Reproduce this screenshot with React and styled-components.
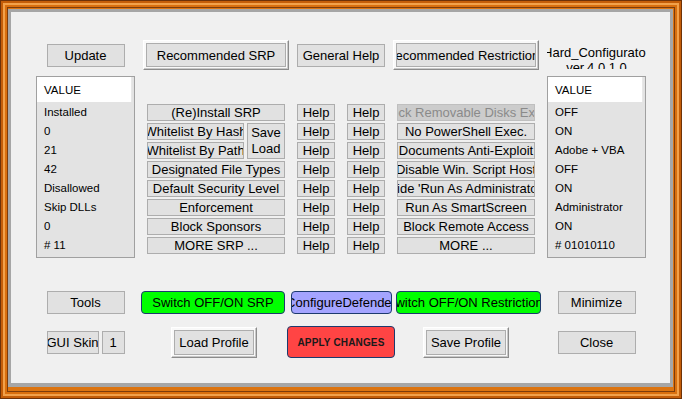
import React from "react";
import styled, { createGlobalStyle } from "styled-components";

const GlobalStyle = createGlobalStyle`
  html, body {
    margin: 0;
    padding: 0;
    background: #f0f0f0;
  }
  body {
    font-family: "Liberation Sans", Arial, sans-serif;
  }
`;

const srpButtons = [
  "(Re)Install SRP",
  "Whitelist By Hash",
  "Whitelist By Path",
  "Designated File Types",
  "Default Security Level",
  "Enforcement",
  "Block Sponsors",
  "MORE SRP ...",
];

const restrictionButtons = [
  { label: "Block Removable Disks Exec.", disabled: true },
  { label: "No PowerShell Exec." },
  { label: "Documents Anti-Exploit" },
  { label: "Disable Win. Script Host" },
  { label: "Hide  'Run As Administrator'" },
  { label: "Run As SmartScreen" },
  { label: "Block Remote Access" },
  { label: "MORE ..." },
];

const srpValues = ["Installed", "0", "21", "42", "Disallowed", "Skip DLLs", "0", "# 11"];
const restrictionValues = ["OFF", "ON", "Adobe + VBA", "OFF", "ON", "Administrator", "ON", "# 01010110"];

const App = () => {
  return (
    <>
      <GlobalStyle />
      <Frame>
        <Panel>
          <Row $h={30} $top={28}>
            <Slot $w={99}>
              <FlatButton $w={78}>
                <Caption>Update</Caption>
              </FlatButton>
            </Slot>
            <Slot $w={162}>
              <RaisedFrame $w={146} $h={30}>
                <FlatButton $fill>
                  <Caption>Recommended SRP</Caption>
                </FlatButton>
              </RaisedFrame>
            </Slot>
            <Slot $w={88}>
              <FlatButton $w={88}>
                <Caption>General Help</Caption>
              </FlatButton>
            </Slot>
            <Slot $w={162}>
              <RaisedFrame $w={146} $h={30}>
                <FlatButton $fill>
                  <Caption>Recommended Restrictions</Caption>
                </FlatButton>
              </RaisedFrame>
            </Slot>
            <Slot $w={99}>
              <TitleLabel>
                <Caption>Hard_Configurator</Caption>
                <Caption>ver.4.0.1.0</Caption>
              </TitleLabel>
            </Slot>
          </Row>

          <Middle>
            <ValueList>
              <ListHeader>VALUE</ListHeader>
              {srpValues.map((v, i) => (
                <ListRow key={i}>{v}</ListRow>
              ))}
            </ValueList>

            <ButtonArea>
              <Slot $w={162} $start>
                <SrpGrid>
                  <FlatButton $span>
                    <Caption>{srpButtons[0]}</Caption>
                  </FlatButton>
                  <FlatButton>
                    <Caption>{srpButtons[1]}</Caption>
                  </FlatButton>
                  <StackButton>
                    <Caption>Save</Caption>
                    <Caption>Load</Caption>
                  </StackButton>
                  <FlatButton>
                    <Caption>{srpButtons[2]}</Caption>
                  </FlatButton>
                  {srpButtons.slice(3).map((b) => (
                    <FlatButton key={b} $span>
                      <Caption>{b}</Caption>
                    </FlatButton>
                  ))}
                </SrpGrid>
              </Slot>
              <HelpSlot>
                <ButtonColumn>
                  {srpButtons.map((b) => (
                    <FlatButton key={b} $w={38} $h={17}>
                      <Caption>Help</Caption>
                    </FlatButton>
                  ))}
                </ButtonColumn>
                <ButtonColumn>
                  {restrictionButtons.map((b) => (
                    <FlatButton key={b.label} $w={38} $h={17}>
                      <Caption>Help</Caption>
                    </FlatButton>
                  ))}
                </ButtonColumn>
              </HelpSlot>
              <Slot $w={162} $start>
                <ButtonColumn>
                  {restrictionButtons.map((b) => (
                    <FlatButton key={b.label} $w={138} $h={17} disabled={b.disabled}>
                      <Caption>{b.label}</Caption>
                    </FlatButton>
                  ))}
                </ButtonColumn>
              </Slot>
            </ButtonArea>

            <ValueList>
              <ListHeader>VALUE</ListHeader>
              {restrictionValues.map((v, i) => (
                <ListRow key={i}>{v}</ListRow>
              ))}
            </ValueList>
          </Middle>

          <Row $h={23} $top={33}>
            <Slot $w={99}>
              <FlatButton $w={78}>
                <Caption>Tools</Caption>
              </FlatButton>
            </Slot>
            <Slot $w={162}>
              <ColorButton $w={144} $bg="#00ff00" $shift={-3}>
                <Caption>Switch OFF/ON SRP</Caption>
              </ColorButton>
            </Slot>
            <Slot $w={88}>
              <ColorButton $w={101} $bg="#a4a4ff">
                <Caption>ConfigureDefender</Caption>
              </ColorButton>
            </Slot>
            <Slot $w={162}>
              <ColorButton $w={145} $bg="#00ff00" $shift={2}>
                <Caption>Switch OFF/ON Restrictions</Caption>
              </ColorButton>
            </Slot>
            <Slot $w={99}>
              <FlatButton $w={78}>
                <Caption>Minimize</Caption>
              </FlatButton>
            </Slot>
          </Row>

          <Row $h={32} $top={12}>
            <Slot $w={99}>
              <SkinGroup>
                <FlatButton $w={52}>
                  <Caption>GUI Skin</Caption>
                </FlatButton>
                <FlatButton $w={23}>
                  <Caption>1</Caption>
                </FlatButton>
              </SkinGroup>
            </Slot>
            <Slot $w={162}>
              <RaisedFrame $w={86} $h={31} $shift={-2}>
                <FlatButton $fill>
                  <Caption>Load Profile</Caption>
                </FlatButton>
              </RaisedFrame>
            </Slot>
            <Slot $w={88}>
              <ApplyButton>
                <Caption>APPLY CHANGES</Caption>
              </ApplyButton>
            </Slot>
            <Slot $w={162}>
              <RaisedFrame $w={86} $h={31}>
                <FlatButton $fill>
                  <Caption>Save Profile</Caption>
                </FlatButton>
              </RaisedFrame>
            </Slot>
            <Slot $w={99}>
              <FlatButton $w={78}>
                <Caption>Close</Caption>
              </FlatButton>
            </Slot>
          </Row>
        </Panel>
      </Frame>
    </>
  );
};

const Frame = styled.div`
  box-sizing: border-box;
  width: 682px;
  height: 399px;
  padding: 9px 9px 12px 8px;
  display: flex;
  background: #dc7410;
  box-shadow: inset 0 0 0 1px #6e3208, inset 0 0 0 3px #c45d08,
    inset 0 0 0 5px #f2a14a, inset 0 0 0 7px #d96f0e,
    inset 0 0 0 8px #7c3c0c;
`;

const Panel = styled.div`
  flex: 1;
  box-sizing: border-box;
  background: #f0f0f0;
  border: 3px solid #a6a6a6;
  border-bottom-width: 4px;
  padding-left: 25px;
  display: flex;
  flex-direction: column;
  overflow: hidden;
`;

const Row = styled.div`
  display: flex;
  align-items: center;
  height: ${(p) => p.$h}px;
  margin-top: ${(p) => p.$top}px;
  flex: none;
`;

const Slot = styled.div`
  flex: none;
  width: ${(p) => p.$w}px;
  display: flex;
  justify-content: center;
  align-items: ${(p) => (p.$start ? "flex-start" : "center")};
`;

const Caption = styled.span`
  flex: none;
  white-space: nowrap;
`;

const FlatButton = styled.button`
  box-sizing: border-box;
  flex: none;
  width: ${(p) => (p.$fill ? "100%" : p.$w ? `${p.$w}px` : "auto")};
  height: ${(p) => (p.$fill ? "100%" : p.$h ? `${p.$h}px` : p.$w ? "23px" : "auto")};
  grid-column: ${(p) => (p.$span ? "1 / -1" : "auto")};
  margin: 0;
  padding: 0;
  display: flex;
  justify-content: center;
  align-items: center;
  overflow: hidden;
  background: #e1e1e1;
  border: 1px solid #adadad;
  color: #000;
  font: 13px/15px "Liberation Sans", Arial, sans-serif;

  &:disabled {
    background: #cccccc;
    border-color: #bfbfbf;
    color: #8a8a8a;
  }
`;

const StackButton = styled(FlatButton)`
  grid-column: 2;
  grid-row: 2 / span 2;
  flex-direction: column;
  line-height: 16px;
  padding-bottom: 1px;
`;

const RaisedFrame = styled.div`
  box-sizing: border-box;
  flex: none;
  width: ${(p) => p.$w}px;
  height: ${(p) => p.$h}px;
  margin-left: ${(p) => (p.$shift > 0 ? p.$shift * 2 : 0)}px;
  margin-right: ${(p) => (p.$shift < 0 ? -p.$shift * 2 : 0)}px;
  padding: 2px;
  display: flex;
  background: #f9f9f9;
  border: 1px solid;
  border-color: #ffffff #8c8c8c #8c8c8c #ffffff;
  box-shadow: inset -1px -1px 0 #c8c8c8;
`;

const TitleLabel = styled.div`
  flex: none;
  width: 99px;
  height: 24px;
  align-self: flex-start;
  margin-top: 4px;
  display: flex;
  flex-direction: column;
  align-items: center;
  overflow: hidden;
  font-size: 13px;
  line-height: 15px;
  color: #000;
`;

const Middle = styled.div`
  display: flex;
  margin-top: 6px;
  height: 182px;
  flex: none;
`;

const ValueList = styled.div`
  box-sizing: border-box;
  flex: none;
  width: 99px;
  height: 182px;
  border: 1px solid #a0a0a0;
  background: #e3e3e3;
  font-size: 11.5px;
  color: #000;
`;

const ListHeader = styled.div`
  height: 25px;
  margin-right: 2px;
  padding-left: 7px;
  display: flex;
  align-items: center;
  background: #ffffff;
  border-right: 1px solid #e8e8e8;
`;

const ListRow = styled.div`
  height: 19px;
  padding-left: 7px;
  display: flex;
  align-items: center;
`;

const ButtonArea = styled.div`
  display: flex;
  padding-top: 28px;
`;

const SrpGrid = styled.div`
  display: grid;
  grid-template-columns: 97px 38px;
  grid-auto-rows: 17px;
  gap: 2px 3px;
  width: 138px;
`;

const HelpSlot = styled.div`
  flex: none;
  width: 88px;
  display: flex;
  justify-content: space-between;
  align-items: flex-start;
`;

const ButtonColumn = styled.div`
  display: flex;
  flex-direction: column;
  gap: 2px;
`;

const ColorButton = styled.button`
  box-sizing: border-box;
  flex: none;
  width: ${(p) => p.$w}px;
  height: 23px;
  margin: 0;
  margin-left: ${(p) => (p.$shift > 0 ? p.$shift * 2 : 0)}px;
  margin-right: ${(p) => (p.$shift < 0 ? -p.$shift * 2 : 0)}px;
  padding: 0;
  display: flex;
  justify-content: center;
  align-items: center;
  overflow: hidden;
  background: ${(p) => p.$bg};
  border: 1px solid #1d3a6e;
  border-radius: 4px;
  color: #000;
  font: 13px/15px "Liberation Sans", Arial, sans-serif;
`;

const ApplyButton = styled(ColorButton)`
  width: 108px;
  height: 32px;
  background: #ff4444;
  font-weight: bold;
  font-size: 10px;
  letter-spacing: 0.15px;
  color: #1a1a1a;
`;

const SkinGroup = styled.div`
  display: flex;
  gap: 3px;
`;

export default App;
